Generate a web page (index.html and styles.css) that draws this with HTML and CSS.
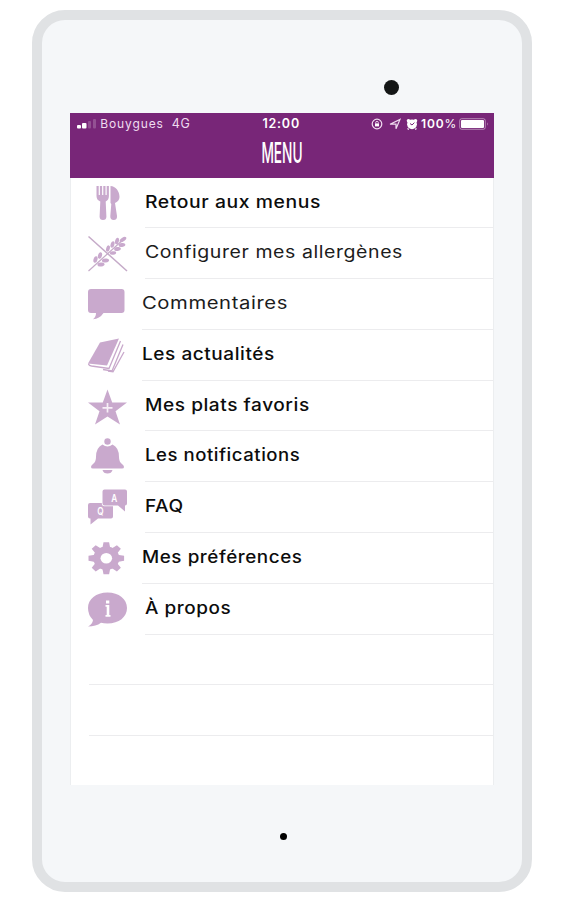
FILE: index.html
```html
<!DOCTYPE html>
<html lang="fr">
<head>
  <meta charset="UTF-8" />
  <meta name="viewport" content="width=device-width, initial-scale=1.0"/>
  <title>Menu</title>
  <link rel="stylesheet" href="styles.css">
</head>
<body>

  <div class="tablet">
    <div class="camera"></div>

    <div class="screen">
      <header class="header">
        <div class="status">
          <div class="status-left">
            <svg class="signal" width="20" height="10" viewBox="0 0 20 10">
              <rect x="0" y="6" width="4" height="3.5" rx="1" fill="#fff"/>
              <rect x="5" y="4" width="4.5" height="5.5" rx="1" fill="#fff"/>
              <rect x="11" y="2" width="3" height="7.5" rx="1" fill="#fff" opacity=".2"/>
              <rect x="16" y="0" width="3" height="9.5" rx="1" fill="#fff" opacity=".2"/>
            </svg>
            <span class="carrier">Bouygues</span>
            <span class="network">4G</span>
          </div>
          <span class="time">12:00</span>
          <div class="status-right">
            <svg width="12" height="12" viewBox="0 0 12 12" fill="none" stroke="#f0dcf0" stroke-width="1.2">
              <circle cx="6" cy="6" r="4.8"/>
              <rect x="4" y="5.4" width="4" height="3" fill="#fff" stroke="none"/>
              <path d="M4.7 5.5V4.6a1.3 1.3 0 0 1 2.6 0v.9" stroke-width=".9"/>
            </svg>
            <svg class="location" width="12" height="12" viewBox="0 0 12 12" fill="none" stroke="#f0dcf0" stroke-width="1.2">
              <path d="M1 6.2 11 1.4 7 10.8V6.2z"/>
            </svg>
            <svg width="12" height="12" viewBox="0 0 12 12">
              <circle cx="6" cy="6.3" r="4.9" fill="#fff"/>
              <circle cx="2.5" cy="2.7" r="1.8" fill="#fff"/>
              <circle cx="9.5" cy="2.7" r="1.8" fill="#fff"/>
              <path d="M2.5 10.5 1.8 11.5M9.5 10.5l.7 1" stroke="#fff" stroke-width="1.6"/>
              <path d="M4 5.5 6 7l2.4-2.4" stroke="#782678" fill="none"/>
            </svg>
            <span class="percent">100<i>%</i></span>
            <svg width="30" height="12" viewBox="0 0 30 12">
              <rect x=".7" y=".7" width="25.6" height="10.6" rx="2" fill="none" stroke="#fff" stroke-opacity=".45"/>
              <rect x="2" y="2" width="23" height="8" rx="1" fill="#fff"/>
              <path d="M28 4.2q1.8 1.8 0 3.6z" fill="#fff" opacity=".45"/>
            </svg>
          </div>
        </div>
        <h1 class="title">MENU</h1>
      </header>

      <ul class="menu">
        <li class="item">
          <svg class="icon" viewBox="0 0 40 40">
            <path d="M8.500 3h2.200v9h1.200V3h2.200v9h1.200V3h2.200v9h1.200V3h2.200v10q0 4-3.200 5.500l.7 15q0 3.500-3.400 3.500t-3.400-3.500l.7-15Q8.500 17 8.500 13z"/>
            <path d="M22.500 3c5 0 9 5 9 11 0 3-2 5-4.500 6l2 13q.3 4-3.300 4t-3.400-4l1-12-.8-1z"/>
          </svg>
          <span class="label"><b class="retour">Retour aux menus</b></span>
        </li>
        <li class="item">
          <svg class="icon" viewBox="0 0 40 40">
            <g fill="none" stroke="#c5aac8">
              <path d="M.5 38 37 5" stroke-width="1.2"/>
              <path d="M.5 3.500 39 38" stroke-width="1.5"/>
            </g>
            <g>
              <ellipse cx="35" cy="6.5" rx="3.8" ry="1.9" transform="rotate(-35 35 6.5)"/>
              <ellipse cx="29" cy="8" rx="3.4" ry="1.9" transform="rotate(-75 29 8)"/>
              <ellipse cx="34" cy="12" rx="3.4" ry="1.9" transform="rotate(-8 34 12)"/>
              <ellipse cx="24.5" cy="11.5" rx="3.4" ry="1.9" transform="rotate(-75 24.5 11.5)"/>
              <ellipse cx="29.5" cy="16" rx="3.4" ry="1.9" transform="rotate(-8 29.5 16)"/>
              <ellipse cx="20" cy="15.5" rx="3.2" ry="1.8" transform="rotate(-75 20 15.5)"/>
              <ellipse cx="25" cy="20" rx="3.2" ry="1.8" transform="rotate(-8 25 20)"/>
              <ellipse cx="12" cy="22.5" rx="3.4" ry="2" transform="rotate(-75 12 22.5)"/>
              <ellipse cx="17.5" cy="27.5" rx="3.6" ry="2" transform="rotate(-8 17.5 27.5)"/>
              <ellipse cx="7.5" cy="26.5" rx="3.4" ry="2" transform="rotate(-75 7.5 26.5)"/>
              <ellipse cx="13" cy="31.5" rx="3.6" ry="2" transform="rotate(-8 13 31.5)"/>
            </g>
          </svg>
          <span class="label"><b class="allergenes light">Configurer mes allergènes</b></span>
        </li>
        <li class="item shifted">
          <svg class="icon" viewBox="0 0 40 40">
            <path d="M3 5h30.500q3 0 3 3v18q0 3-3 3H15.500Q11.500 35 5 35.300q3-2.300 3-6.300H3q-3 0-3-3V8q0-3 3-3z"/>
          </svg>
          <span class="label"><b class="commentaires light">Commentaires</b></span>
        </li>
        <li class="item shifted">
          <svg class="icon" viewBox="0 0 40 40">
            <path d="M12 7.500 31 3.500 19 30.500 0 28.500z"/>
            <g fill="none" stroke="#c8a8cb" stroke-width="1.3">
              <path d="M.5 28.500q0 2 3 2.500L21 33.500 32.500 6"/>
              <path d="M15 34.500 24 36 35 9.500"/>
              <path d="M20 36l5 .8L36 17"/>
            </g>
          </svg>
          <span class="label"><b class="actualites">Les actualités</b></span>
        </li>
        <li class="item">
          <svg class="icon" viewBox="0 0 40 40">
            <path d="M19.500 3.500 24.200 16.500H39L27.500 25.300 32 38.500 19.500 30.500 7 38.500l4.500-13.200L0 16.500h14.800z"/>
            <path d="M19.500 17v9.500M14.500 21.800h10" stroke="#f7eff7" stroke-width="1.7"/>
          </svg>
          <span class="label"><b class="favoris">Mes plats favoris</b></span>
        </li>
        <li class="item">
          <svg class="icon" viewBox="0 0 40 40">
            <circle cx="19.500" cy="5.500" r="3.200"/>
            <path d="M14.500 8.500q5 4 10 0 6.500 3 6.500 12.500 0 5 3 7 2 1.500 2 3 0 1.500-2 1.500H5q-2 0-2-1.500t2-3q3-2 3-7 0-9.500 6.500-12.500z"/>
            <path d="M14.500 34h10q-1 3.500-5 3.500t-5-3.500z"/>
          </svg>
          <span class="label"><b class="notifications">Les notifications</b></span>
        </li>
        <li class="item">
          <svg class="icon" viewBox="0 0 40 40">
            <path d="M2 16h21q2 0 2 2v11.500q0 2-2 2H10L2.500 37.500v-6H2q-2 0-2-2V18q0-2 2-2z"/>
            <path d="M16.500 2.500H37q2 0 2 2v12q0 2-2 2v6l-7-6H16.500q-2 0-2-2v-12q0-2 2-2z" stroke="#fff" stroke-width="1.4" paint-order="stroke"/>
            <text class="glyph" x="35" y="15">A</text>
            <text class="glyph" x="16.500" y="28.500">Q</text>
          </svg>
          <span class="label"><b class="faq">FAQ</b></span>
        </li>
        <li class="item shifted">
          <svg class="icon" viewBox="0 0 40 40">
            <g transform="translate(18.3 20.3) scale(1 .9)">
              <circle r="13"/>
              <path d="M-4-11-2.800-17.800h5.600L4-11zM-4 11l1.200 6.800h5.600L4 11z"/>
              <path transform="rotate(45)" d="M-4-11-2.800-17.800h5.600L4-11zM-4 11l1.200 6.800h5.600L4 11z"/>
              <path transform="rotate(90)" d="M-4-11-2.800-17.800h5.600L4-11zM-4 11l1.200 6.800h5.600L4 11z"/>
              <path transform="rotate(135)" d="M-4-11-2.800-17.800h5.600L4-11zM-4 11l1.200 6.800h5.600L4 11z"/>
              <circle r="5.800" fill="#fff"/>
            </g>
          </svg>
          <span class="label"><b class="preferences">Mes préférences</b></span>
        </li>
        <li class="item">
          <svg class="icon" viewBox="0 0 40 40">
            <path d="M19.500 3.500C31 3.500 39 10 39 19S31 34.500 19.500 34.500q-4 0-6.500-.8Q8 37.500 0 37.500q4.500-2.500 5-6.500-5-5-5-12C0 10 8 3.500 19.500 3.500z"/>
            <path d="M17.500 16h3.800v10h1.200v1.800h-5V26h1.200v-8.200h-1.200zM18 11.500h3.300v3H18z" fill="#fff"/>
          </svg>
          <span class="label"><b class="apropos">À propos</b></span>
        </li>
        <li class="item empty"></li>
        <li class="item empty"></li>
      </ul>
    </div>

    <div class="home"></div>
  </div>

</body>
</html>
```
FILE: styles.css
```css
* {
  box-sizing: border-box;
}

body {
  margin: 0;
  height: 900px;
  overflow: hidden;
  background: #fff;
  font-family: Inter, "Liberation Sans", sans-serif;
}

.tablet {
  width: 500px;
  height: 882px;
  margin: 9.5px 0 0 31.7px;
  padding: 60.5px 28.5px 0;
  border: 10.3px solid #e0e2e4;
  border-radius: 33px;
  background: #f5f7f9;
}

.camera {
  width: 15px;
  height: 15px;
  margin: 0 0 17.5px 313.5px;
  border-radius: 50%;
  background: #141616;
}

.screen {
  width: 424px;
  height: 672px;
  background: #fff;
  border-left: 1px solid #eceef0;
  border-right: 1px solid #eceef0;
}

.header {
  height: 65px;
  margin: 0 -1px;
  background: #782678;
  color: #fff;
}

.status {
  display: grid;
  grid-template-columns: 1fr 44px 1fr;
  align-items: center;
  height: 22px;
  padding: 0 5px 0 7px;
  font-size: 12px;
}

.status-left,
.status-right {
  display: flex;
  align-items: center;
  color: #efdcef;
}

.status-right {
  justify-content: flex-end;
  gap: 3px;
}

.signal {
  margin-right: 3px;
}

.carrier {
  letter-spacing: 0.9px;
}

.network {
  margin-left: 8px;
  font-size: 12.5px;
  letter-spacing: 0.5px;
}

.time {
  margin-left: -4px;
  font-weight: 600;
  font-size: 12.5px;
  letter-spacing: 0.8px;
  text-align: center;
}

.location {
  margin: 0 2px 0 3px;
}

.percent {
  font-weight: 600;
  letter-spacing: 0.8px;
  color: #fff;
}

.percent i {
  font-style: normal;
  font-weight: 400;
  letter-spacing: 0;
}

.title {
  width: 100px;
  margin: 0 auto;
  font-size: 28.5px;
  line-height: 35px;
  font-weight: 500;
  text-align: center;
  transform: scaleX(0.48);
}

.menu {
  margin: 0;
  padding: 0;
  list-style: none;
}

.item {
  display: flex;
  height: 50.8px;
  padding-left: 17px;
}

.icon {
  flex: none;
  width: 40px;
  height: 40px;
  margin: 5px 17px 0 0;
  fill: #c9a9cd;
}

.label {
  flex: 1;
  border-bottom: 1.5px solid #ececee;
  font-size: 17px;
  line-height: 49px;
  color: #0c0c0c;
  white-space: nowrap;
}

.label b {
  display: inline-block;
  font-weight: 500;
  letter-spacing: 0.5px;
  transform-origin: left;
}

.label .light {
  font-weight: 400;
  color: #1c1c1c;
}

.retour { transform: scaleX(1.138); }
.allergenes { transform: scaleX(1.147); }
.commentaires { transform: scaleX(1.19); }
.actualites { transform: scaleX(1.118); }
.favoris { transform: scaleX(1.121); }
.notifications { transform: scaleX(1.09); }
.faq { transform: scaleX(1.12); }
.preferences { transform: scaleX(1.108); }
.apropos { transform: scaleX(1.112); }

.shifted .icon {
  margin-right: 14px;
}

.empty {
  margin-left: 18px;
  border-bottom: 1.5px solid #ececee;
}

.glyph {
  font-size: 11px;
  font-weight: 600;
  text-anchor: middle;
  fill: #fff;
  transform: scaleX(0.75);
}

.home {
  width: 7px;
  height: 7px;
  margin: 48px 0 0 209.5px;
  border-radius: 50%;
  background: #000;
}
```
